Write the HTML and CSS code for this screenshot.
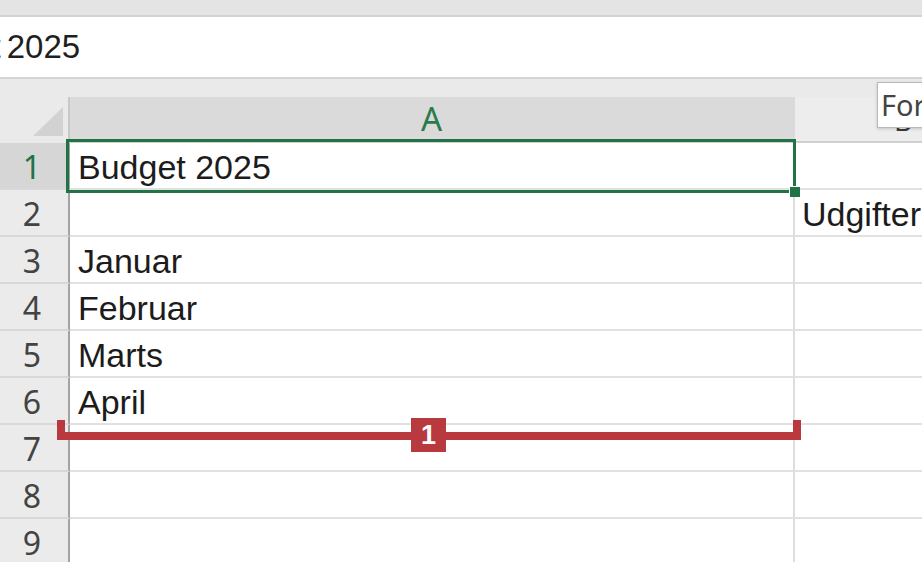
FILE: index.html
```html
<!DOCTYPE html>
<html lang="da">
<head>
<meta charset="utf-8">
<title>Budget 2025</title>
<link rel="stylesheet" href="styles.css">
</head>
<body>
<div class="app">
  <div class="topbar"></div>
  <div class="formula"><span class="ftext">Budget 2025</span></div>
  <div class="workarea">
    <div class="sheet">
      <div class="corner"><span class="tri"></span></div>
      <div class="colhead sel">A</div>
      <div class="colhead other"><span class="blabel">B</span></div>

      <div class="rowhead sel">1</div><div class="cell a">Budget 2025</div><div class="cell b"></div>
      <div class="rowhead">2</div><div class="cell a"></div><div class="cell b">Udgifter</div>
      <div class="rowhead">3</div><div class="cell a">Januar</div><div class="cell b"></div>
      <div class="rowhead">4</div><div class="cell a">Februar</div><div class="cell b"></div>
      <div class="rowhead">5</div><div class="cell a">Marts</div><div class="cell b"></div>
      <div class="rowhead">6</div><div class="cell a">April</div><div class="cell b"></div>
      <div class="rowhead">7</div><div class="cell a"></div><div class="cell b"></div>
      <div class="rowhead">8</div><div class="cell a"></div><div class="cell b"></div>
      <div class="rowhead">9</div><div class="cell a"></div><div class="cell b"></div>

      <div class="selection"><span class="handle"></span></div>
      <div class="bracket"><span class="badge">1</span></div>
    </div>
    <div class="tooltip">For</div>
  </div>
</div>
</body>
</html>
```

FILE: styles.css
```css
html, body {
  margin: 0;
  padding: 0;
  width: 922px;
  height: 562px;
  overflow: hidden;
  background: #e9e9e9;
  font-family: "Liberation Sans", Arial, sans-serif;
}

.app {
  width: 922px;
  height: 562px;
  overflow: hidden;
}

.topbar {
  height: 15px;
  background: #e4e4e4;
  border-bottom: 2px solid #d2d2d2;
}

.formula {
  height: 60px;
  background: #ffffff;
  border-bottom: 2px solid #d4d4d4;
  overflow: hidden;
  white-space: nowrap;
  font-size: 33px;
  line-height: 60px;
  color: #1f1f1f;
}

.ftext {
  display: inline-block;
  margin-left: -104px;
  word-spacing: -3px;
}

.workarea {
  position: relative;
  padding-top: 18px;
  background: #eaeaea;
}

.sheet {
  position: relative;
  display: grid;
  grid-template-columns: 70px 725px 1fr;
  grid-template-rows: 46px repeat(9, 47px);
}

.corner {
  position: relative;
  background: #eaeaea;
  border-right: 2px solid #c8c8c8;
}

.tri {
  position: absolute;
  left: 33px;
  top: 10px;
  width: 30px;
  height: 29px;
  background: #d2d2d2;
  clip-path: polygon(100% 0, 100% 100%, 0 100%);
}

.colhead {
  font-family: "Noto Sans", "Liberation Sans", sans-serif;
  font-size: 33px;
  line-height: 44px;
  text-align: center;
  border-bottom: 2px solid #d0d0d0;
}

.colhead.sel {
  background: #dadada;
  color: #2b7a4d;
  border-right: 2px solid #dadada;
}

.colhead.other {
  background: #ededed;
  text-align: left;
  color: #3a3a3a;
  overflow: hidden;
}

.blabel {
  display: inline-block;
  padding-left: 99px;
  font-size: 28px;
  line-height: 24px;
}

.rowhead {
  background: #ebebeb;
  border-right: 2px solid #a3a3a3;
  border-bottom: 2px solid #d8d8d8;
  font-family: "Noto Sans", "Liberation Sans", sans-serif;
  font-size: 32px;
  line-height: 45px;
  padding-top: 1px;
  box-sizing: border-box;
  text-align: center;
  color: #434343;
  padding-right: 4px;
}

.rowhead.sel {
  background: #d6d6d6;
  color: #227248;
}

.cell {
  background: #ffffff;
  border-bottom: 2px solid #e1e1e1;
  font-size: 34px;
  line-height: 45px;
  padding-top: 2px;
  box-sizing: border-box;
  color: #1c1c1c;
  white-space: nowrap;
  overflow: hidden;
}

.cell.a {
  border-right: 2px solid #dedede;
  padding-left: 8px;
}

.cell.b {
  padding-left: 7px;
}

.selection {
  position: absolute;
  left: 66px;
  top: 42px;
  width: 724px;
  height: 48px;
  border: 3px solid #217346;
  pointer-events: none;
}

.handle {
  position: absolute;
  right: -7px;
  bottom: -7px;
  width: 10px;
  height: 10px;
  background: #217346;
  border-left: 1px solid #ffffff;
  border-top: 1px solid #ffffff;
}

.bracket {
  position: absolute;
  left: 57px;
  top: 323px;
  width: 728px;
  height: 12px;
  border: 0 solid #b83a3e;
  border-width: 0 8px 8px 8px;
}

.badge {
  position: absolute;
  left: 346px;
  top: -2px;
  width: 35px;
  height: 34px;
  background: #b83a3e;
  color: #ffffff;
  font-weight: bold;
  font-size: 27px;
  line-height: 34px;
  text-align: center;
}

.tooltip {
  position: absolute;
  left: 877px;
  top: 3px;
  width: 70px;
  height: 44px;
  background: #ffffff;
  border: 1px solid #b9b9b9;
  box-shadow: 0 1px 3px rgba(0, 0, 0, 0.18);
  font-family: "Noto Sans", "Liberation Sans", sans-serif;
  font-size: 29px;
  line-height: 44px;
  padding-left: 3px;
  color: #444444;
}
```
